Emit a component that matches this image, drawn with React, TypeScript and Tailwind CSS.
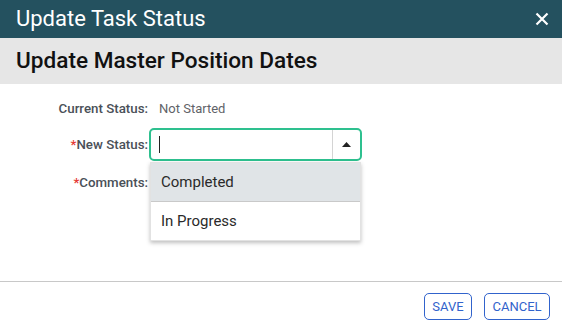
const App = () => {
  return (
    <div
      className="w-[562px] h-[330px] bg-white flex flex-col relative overflow-hidden"
      style={{ fontFamily: "Roboto, 'Liberation Sans', sans-serif" }}
    >
      <div className="h-[38px] bg-[#24515f] flex items-center justify-between pl-4 pr-[13px] shrink-0">
        <span className="text-white text-[22px] leading-none">Update Task Status</span>
        <svg width="14" height="14" viewBox="0 0 14 14" className="text-white">
          <path d="M1.5 1.5 L12.5 12.5 M12.5 1.5 L1.5 12.5" stroke="currentColor" strokeWidth="2.2" />
        </svg>
      </div>

      <div className="h-[46px] bg-[#e6e6e6] flex items-center px-4 shrink-0">
        <span className="text-[#111] text-[22.6px] font-medium leading-none">
          Update Master Position Dates
        </span>
      </div>

      <div className="flex-1 pt-[15px]">
        <div className="grid grid-cols-[148px_1fr] gap-x-[11px] items-center">
          <div className="text-right text-[13.3px] font-medium text-[#4a5058] h-5 leading-5">
            Current Status:
          </div>
          <div className="text-[13px] text-[#5f6368] h-5 leading-5">Not Started</div>

          <div className="text-right text-[13.3px] font-medium text-[#4a5058] mt-[9px]">
            <span className="text-[#e53935]">*</span>New Status:
          </div>
          <div className="mt-[9px] -ml-[10px] w-[213px] h-[33px] border-2 border-[#2ec08f] rounded-[5px] flex items-stretch">
            <div className="flex-1 flex items-center pl-[8px]">
              <div className="w-px h-[17px] bg-[#222]" />
            </div>
            <div className="w-[28px] border-l border-[#d4d4d4] flex items-center justify-center">
              <svg width="9" height="5" viewBox="0 0 9 5">
                <path d="M0 5 L4.5 0 L9 5 Z" fill="#222" />
              </svg>
            </div>
          </div>

          <div className="text-right text-[13.3px] font-medium text-[#4a5058] mt-[12px]">
            <span className="text-[#e53935]">*</span>Comments:
          </div>
          <div className="mt-[12px] h-5" />
        </div>
      </div>

      <div className="absolute left-[150px] top-[162px] w-[211px] bg-white shadow-[0_2px_4px_rgba(0,0,0,0.25)] border border-[#e2e2e2]">
        <div className="h-[39px] bg-[#e0e4e7] flex items-center px-[10px] text-[15px] text-[#2a2a2a] border-b border-[#c9c9c9]">
          Completed
        </div>
        <div className="h-[38px] flex items-center px-[10px] text-[15px] text-[#2a2a2a]">
          In Progress
        </div>
      </div>

      <div className="h-[49px] border-t border-[#c8c8c8] flex items-center justify-end gap-[12px] pr-[12px] shrink-0">
        <button className="w-[48px] h-[27px] border border-[#3163cc] rounded-[5px] text-[#3163cc] text-[13px] leading-none">
          SAVE
        </button>
        <button className="w-[66px] h-[27px] border border-[#3163cc] rounded-[5px] text-[#3163cc] text-[13px] leading-none">
          CANCEL
        </button>
      </div>
    </div>
  );
};

export default App;
